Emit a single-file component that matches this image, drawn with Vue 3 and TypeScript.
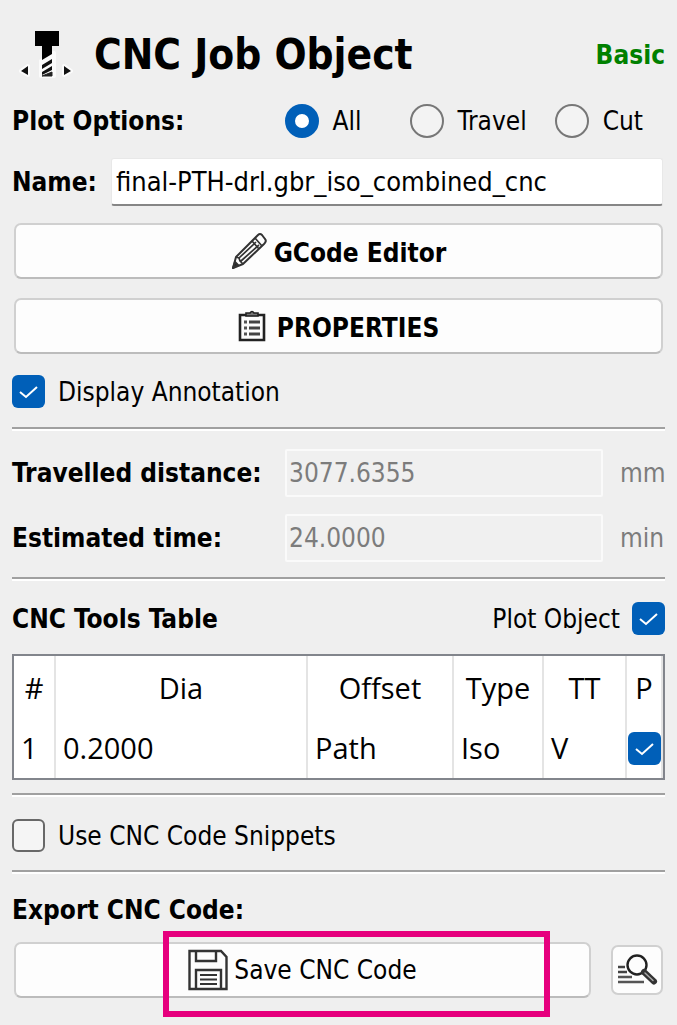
<script setup lang="ts">
import { ref } from 'vue'

type PlotKind = 'all' | 'travel' | 'cut'

interface Tool {
  id: number
  dia: string
  offset: string
  type: string
  tt: string
  plot: boolean
}

const plotOptions: { value: PlotKind; label: string }[] = [
  { value: 'all', label: 'All' },
  { value: 'travel', label: 'Travel' },
  { value: 'cut', label: 'Cut' },
]

const plotKind = ref<PlotKind>('all')
const name = ref('final-PTH-drl.gbr_iso_combined_cnc')
const annotation = ref(true)
const plotObject = ref(true)
const snippets = ref(false)
const distance = ref('3077.6355')
const time = ref('24.0000')
const tools = ref<Tool[]>([
  { id: 1, dia: '0.2000', offset: 'Path', type: 'Iso', tt: 'V', plot: true },
])
</script>

<template>
  <main class="panel">
    <header class="header">
      <svg class="logo" width="56" height="52" viewBox="0 0 56 52" aria-hidden="true">
        <path d="M23 32L36 24V47H23ZM3 42L10 37V46ZM53 42L46 37V46Z" fill="#fff" stroke="#fff" stroke-width="4" stroke-linejoin="round" opacity="0.8" />
        <path d="M17 2H41V17H34V25L24 31V17H17Z" fill="#000" />
        <path d="M24 36L34 30V34L24 40ZM24 43L34 37V41L24 46Z" fill="#111" />
        <path d="M24 47L34 43V47Z" fill="#222" stroke="#222" />
        <path d="M3 42L10 37V46ZM53 42L46 37V46Z" fill="#111" />
      </svg>
      <h1 class="title">CNC Job Object</h1>
      <span class="level">Basic</span>
    </header>

    <div class="plot-row" role="radiogroup" aria-labelledby="plot-label">
      <span id="plot-label" class="strong">Plot Options:</span>
      <div class="radios">
        <label v-for="o in plotOptions" :key="o.value" class="radio-label">
          <input v-model="plotKind" class="radio" type="radio" name="plot" :value="o.value" />
          <span>{{ o.label }}</span>
        </label>
      </div>
    </div>

    <div class="name-row">
      <label class="strong" for="name">Name:</label>
      <input id="name" v-model="name" class="field name" type="text" />
    </div>

    <button class="button" type="button">
      <svg width="36" height="38" viewBox="0 0 36 38" fill="none" stroke="#333" stroke-width="2" stroke-linejoin="round" aria-hidden="true">
        <path d="M2 36L5 25L27 3Q29 1 31 3L34 7Q36 9 33 12L12 32Z" />
        <path d="M5 25L8 26L9 29L12 32M24 6L31 14M21 9L28 17M8 26L25 10M10 29L28 13" stroke-width="1.7" />
        <path d="M2 36L4 30L7 33Z" fill="#222" />
      </svg>
      <span class="caption">GCode Editor</span>
    </button>

    <button class="button properties" type="button">
      <svg width="28" height="32" viewBox="0 0 28 32" fill="none" aria-hidden="true">
        <path d="M2 5H26V30H2Z" stroke="#222" stroke-width="2.6" />
        <path d="M8 6V3H12Q14 0 16 3H20V6Z" fill="#777" stroke="#222" stroke-width="1.6" />
        <path d="M6 12H9M6 18H9M6 24H9" stroke="#555" stroke-width="3" />
        <path d="M11 12H22M11 18H22M11 24H22" stroke="#444" stroke-width="3" />
      </svg>
      <span class="caption">PROPERTIES</span>
    </button>

    <label class="check-row">
      <input v-model="annotation" class="check" type="checkbox" />
      <span>Display Annotation</span>
    </label>

    <hr class="rule" />

    <div class="stats">
      <label class="strong" for="distance">Travelled distance:</label>
      <input id="distance" v-model="distance" class="field disabled" type="text" disabled />
      <span class="unit">mm</span>
      <label class="strong" for="time">Estimated time:</label>
      <input id="time" v-model="time" class="field disabled" type="text" disabled />
      <span class="unit">min</span>
    </div>

    <hr class="rule" />

    <div class="tools-head">
      <span id="tools-label" class="strong">CNC Tools Table</span>
      <label class="plot-object">
        <span>Plot Object</span>
        <input v-model="plotObject" class="check" type="checkbox" />
      </label>
    </div>

    <table class="tools" aria-labelledby="tools-label">
      <colgroup>
        <col class="c-id" /><col /><col class="c-offset" /><col class="c-type" /><col class="c-tt" /><col class="c-plot" />
      </colgroup>
      <thead>
        <tr>
          <th>#</th>
          <th>Dia</th>
          <th>Offset</th>
          <th>Type</th>
          <th>TT</th>
          <th>P</th>
        </tr>
      </thead>
      <tbody>
        <tr v-for="t in tools" :key="t.id">
          <td>{{ t.id }}</td>
          <td>{{ t.dia }}</td>
          <td>{{ t.offset }}</td>
          <td>{{ t.type }}</td>
          <td>{{ t.tt }}</td>
          <td class="plot-cell">
            <input v-model="t.plot" class="check" type="checkbox" :aria-label="`Plot tool ${t.id}`" />
          </td>
        </tr>
      </tbody>
    </table>

    <hr class="rule" />

    <label class="check-row snippets">
      <input v-model="snippets" class="check" type="checkbox" />
      <span>Use CNC Code Snippets</span>
    </label>

    <hr class="rule" />

    <p class="strong export-label">Export CNC Code:</p>
    <div class="export-row">
      <div class="save-wrap">
        <button class="button save" type="button">
          <svg width="40" height="42" viewBox="0 0 40 42" fill="none" stroke="#333" stroke-width="2.4" aria-hidden="true">
            <path d="M1.5 2H33L38.5 8V40H1.5Z" />
            <path d="M8 2V12H28V2" />
            <path d="M8 40V21H33V40" />
            <path d="M12 26H29M12 30.5H29M12 35H29" stroke-width="2" />
          </svg>
          <span>Save CNC Code</span>
        </button>
        <div class="highlight"></div>
      </div>
      <button class="view" type="button" aria-label="View CNC code">
        <svg width="42" height="34" viewBox="0 0 42 34" fill="none" aria-hidden="true">
          <path d="M2 14H9M2 19H11" stroke="#444" stroke-width="2.4" />
          <path d="M2 24H16M2 29H28" stroke="#555" stroke-width="2.6" />
          <circle cx="21" cy="12" r="9.5" stroke="#222" stroke-width="2.4" />
          <path d="M28 19L38 28.5" stroke="#333" stroke-width="6" stroke-linecap="round" />
          <path d="M29 20L37 27.5" stroke="#aaa" stroke-width="1.5" stroke-linecap="round" />
        </svg>
      </button>
    </div>
  </main>
</template>

<style>
body {
  background: #efefef;
}
</style>

<style scoped>
.panel,
.panel * {
  box-sizing: border-box;
}

.panel {
  display: flex;
  flex-direction: column;
  padding: 25px 12px 24px;
  background: #efefef;
  color: #000;
  font: 26px/32px "DejaVu Sans Condensed", "DejaVu Sans", "Noto Sans", sans-serif;
}

.header {
  display: flex;
  align-items: center;
  height: 60px;
  padding-left: 6px;
}

.title {
  flex: 1;
  margin: 0 0 0 20px;
  font-size: 42px;
  line-height: 52px;
  white-space: nowrap;
}

.level,
.strong {
  font-weight: bold;
  white-space: nowrap;
}

.level {
  color: #008000;
}

.plot-row {
  display: flex;
  align-items: center;
  justify-content: space-between;
  margin-top: 19px;
}

.radios {
  display: flex;
  gap: 28px;
  padding-right: 22px;
}

.radio-label {
  display: flex;
  align-items: center;
  gap: 14px;
}

.radio-label:first-child {
  margin-right: 20px;
}

.radio {
  appearance: none;
  flex: none;
  width: 34px;
  height: 34px;
  margin: 0;
  border: 2px solid #777;
  border-radius: 50%;
  background: #f3f3f3;
}

.radio:checked {
  border: 10px solid #005fb8;
  background: #fff;
}

.name-row {
  display: flex;
  align-items: center;
  gap: 14px;
  margin-top: 20px;
  padding-right: 2px;
}

.field {
  flex: 1;
  width: 100%;
  min-width: 0;
  height: 48px;
  padding: 0 4px;
  border: 1px solid #e8e8e8;
  border-bottom: 2px solid #868686;
  border-radius: 3px;
  background: #fff;
  color: #000;
  font: inherit;
}

.field.name {
  font-size: 27px;
}

.button {
  display: flex;
  align-items: center;
  justify-content: center;
  gap: 7px;
  height: 56px;
  margin: 17px 2px 0;
  padding: 0;
  border: 2px solid #d0d0d0;
  border-bottom-color: #bcbcbc;
  border-radius: 7px;
  background: #fdfdfd;
  color: #000;
  font: inherit;
  font-weight: bold;
}

.caption {
  padding-top: 4px;
}

.button.properties {
  gap: 11px;
  margin-top: 19px;
}

.check-row {
  display: flex;
  align-items: center;
  gap: 13px;
  margin: 21px 0 19px;
}

.check {
  appearance: none;
  flex: none;
  display: block;
  width: 33px;
  height: 33px;
  margin: 0;
  border: 2px solid #686868;
  border-radius: 6px;
  background: #f5f5f5;
}

.check:checked {
  border: 0;
  background: #005fb8 url("data:image/svg+xml,%3Csvg xmlns='http://www.w3.org/2000/svg' viewBox='0 0 33 33'%3E%3Cpath d='M8 17L14 22L25 12' fill='none' stroke='white' stroke-width='2'/%3E%3C/svg%3E");
}

.rule {
  width: 100%;
  height: 4px;
  margin: 0;
  border: 0;
  border-top: 2px solid #a0a0a0;
  border-bottom: 2px solid #fff;
}

.stats {
  display: grid;
  grid-template-columns: 256px 1fr 45px;
  align-items: center;
  gap: 17px;
  margin: 18px 0 15px;
}

.field.disabled {
  padding: 0 2px;
  border: 2px solid #fafafa;
  border-radius: 2px;
  background: #f0f0f0;
  color: #7c7c7c;
}

.unit {
  color: #7c7c7c;
}

.tools-head {
  display: flex;
  align-items: center;
  justify-content: space-between;
  margin: 21px 0 19px;
}

.plot-object {
  display: flex;
  align-items: center;
  gap: 12px;
}

.tools {
  width: 100%;
  margin-bottom: 13px;
  border: 2px solid #82858c;
  border-spacing: 0;
  background: #fff;
  font: 29px/40px "Open Sans", "Noto Sans", sans-serif;
  table-layout: fixed;
}

.c-id {
  width: 42px;
}

.c-offset {
  width: 146px;
}

.c-type {
  width: 90px;
}

.c-tt {
  width: 83px;
}

.c-plot {
  width: 36px;
}

.tools th,
.tools td {
  height: 60px;
  padding: 0 7px;
  border-right: 2px solid #e4e4e4;
  font-weight: normal;
  text-align: left;
}

.tools th {
  height: 62px;
  padding: 2px 0 0;
  text-align: center;
}

.tools .plot-cell {
  padding: 0 0 0 1px;
}

.snippets {
  margin: 22px 0 18px;
}

.export-label {
  margin: 20px 0 16px;
}

.export-row {
  display: flex;
  align-items: center;
  gap: 20px;
  padding: 0 2px;
}

.save-wrap {
  position: relative;
  flex: 1;
}

.button.save {
  gap: 6px;
  width: 100%;
  margin: 0;
  font-weight: normal;
}

.highlight {
  position: absolute;
  inset: -11px 41px -19px 149px;
  border: 6px solid #e6007e;
  pointer-events: none;
}

.view {
  display: flex;
  align-items: center;
  justify-content: center;
  width: 52px;
  height: 50px;
  padding: 0;
  border: 2px solid #d0d0d0;
  border-radius: 7px;
  background: #fdfdfd;
}
</style>
